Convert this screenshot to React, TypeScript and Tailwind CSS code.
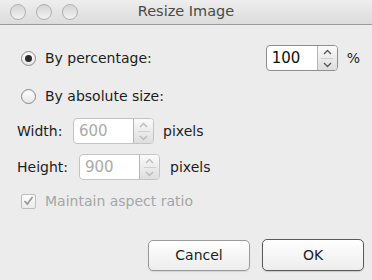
import React from "react";

const font = { fontFamily: '"Lucida Grande", "DejaVu Sans", sans-serif' };

function Stepper({ disabled }: { disabled?: boolean }) {
    const c = disabled ? "#b9b9b9" : "#555";
    return (
        <div className="flex h-full w-[20px] flex-col items-center justify-center gap-[3px] border-l border-[#b5b5b5] bg-gradient-to-b from-[#fafafa] to-[#dedede]">
            <svg width="9" height="6" viewBox="0 0 9 6">
                <path d="M1 5 L4.5 1.5 L8 5" fill="none" stroke={c} strokeWidth="1.3" />
            </svg>
            <div className="h-px w-[12px] bg-[#cfcfcf]" />
            <svg width="9" height="6" viewBox="0 0 9 6">
                <path d="M1 1 L4.5 4.5 L8 1" fill="none" stroke={c} strokeWidth="1.3" />
            </svg>
        </div>
    );
}

function Spinbox({ value, width, disabled }: { value: string; width: string; disabled?: boolean }) {
    return (
        <div
            className={`flex h-[26px] ${width} overflow-hidden rounded-[4px] border ${disabled ? "border-[#c4c4c4]" : "border-[#8e8e8e]"
                } bg-white`}
        >
            <div className={`flex flex-1 items-center pl-[5px] text-[15px] ${disabled ? "text-[#ababab]" : "text-[#111]"}`}>
                {value}
            </div>
            <Stepper disabled={disabled} />
        </div>
    );
}

function Radio({ checked }: { checked?: boolean }) {
    return (
        <div className="flex h-[15px] w-[15px] items-center justify-center rounded-full border border-[#8a8a8a] bg-gradient-to-b from-white to-[#e6e6e6] shadow-[inset_0_1px_1px_rgba(0,0,0,0.08)]">
            {checked && <div className="h-[7px] w-[7px] rounded-full bg-[#2a2a2a]" />}
        </div>
    );
}

export default function App() {
    return (
        <div className="h-[280px] w-[372px] overflow-hidden bg-[#ececec]" style={font}>
            {/* Title bar */}
            <div className="relative flex h-[25px] items-center border-b border-[#9b9b9b] bg-gradient-to-b from-[#eeeeee] to-[#dcdcdc]">
                <div className="flex gap-[10px] pl-[10px]">
                    {[0, 1, 2].map((i) => (
                        <div
                            key={i}
                            className="h-[16px] w-[16px] rounded-full border border-[#b0b0b0] bg-gradient-to-b from-[#d4d4d4] to-[#f2f2f2]"
                        />
                    ))}
                </div>
                <div className="absolute inset-0 flex items-center justify-center text-[14.5px] text-[#4a4a4a]">
                    Resize Image
                </div>
            </div>

            <div className="flex flex-col pl-[21px] pr-[8px] pt-[20px]">
                {/* By percentage */}
                <div className="flex h-[26px] items-center">
                    <Radio checked />
                    <span className="ml-[9px] text-[14px] text-[#1d1d1d]">By percentage:</span>
                    <div className="ml-auto flex items-center">
                        <Spinbox value="100" width="w-[72px]" />
                        <span className="ml-[9px] text-[14px] text-[#1d1d1d]">%</span>
                    </div>
                    <div className="w-[4px]" />
                </div>

                {/* By absolute size */}
                <div className="mt-[12px] flex h-[26px] items-center">
                    <Radio />
                    <span className="ml-[9px] text-[14px] text-[#1d1d1d]">By absolute size:</span>
                </div>

                <div className="-ml-[4px] mt-[9px] flex h-[26px] items-center">
                    <span className="w-[56px] text-[14px] text-[#1d1d1d]">Width:</span>
                    <Spinbox value="600" width="w-[81px]" disabled />
                    <span className="ml-[9px] text-[14px] text-[#1d1d1d]">pixels</span>
                </div>

                <div className="-ml-[4px] mt-[10px] flex h-[26px] items-center">
                    <span className="w-[62px] text-[14px] text-[#1d1d1d]">Height:</span>
                    <Spinbox value="900" width="w-[81px]" disabled />
                    <span className="ml-[10px] text-[14px] text-[#1d1d1d]">pixels</span>
                </div>

                <div className="mt-[13px] flex h-[16px] items-center">
                    <div className="flex h-[15px] w-[15px] items-center justify-center rounded-[2px] border border-[#bdbdbd] bg-gradient-to-b from-white to-[#eaeaea]">
                        <svg width="11" height="10" viewBox="0 0 11 10">
                            <path d="M1.5 5 L4.3 8 L9.5 1" fill="none" stroke="#9a9a9a" strokeWidth="1.8" />
                        </svg>
                    </div>
                    <span className="ml-[9px] text-[14px] text-[#a6a6a6]">Maintain aspect ratio</span>
                </div>

                {/* Buttons */}
                <div className="mt-[30px] flex items-center justify-end gap-[12px]">
                    <button className="flex h-[31px] w-[102px] items-center justify-center rounded-[5px] border border-[#9a9a9a] bg-gradient-to-b from-white to-[#ededed] text-[14px] text-[#1d1d1d] shadow-[0_1px_1px_rgba(0,0,0,0.1)]">
                        Cancel
                    </button>
                    <button className="flex h-[32px] w-[102px] items-center justify-center rounded-[5px] border border-[#5a5a5a] bg-gradient-to-b from-white to-[#ededed] text-[14px] text-[#1d1d1d] shadow-[0_1px_1px_rgba(0,0,0,0.15)]">
                        OK
                    </button>
                </div>
            </div>
        </div>
    );
}
